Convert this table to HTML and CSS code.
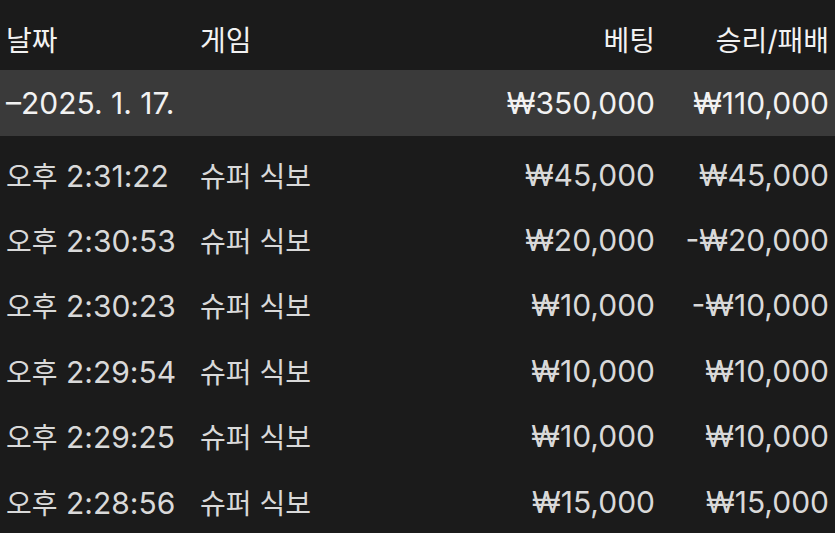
FILE: index.html
```html
<!DOCTYPE html>
<html lang="ko">
<head>
<meta charset="utf-8">
<link rel="stylesheet" href="styles.css">
</head>
<body>
<div class="table">
  <div class="row head">
    <div class="c date ko">날짜</div>
    <div class="c game ko">게임</div>
    <div class="c bet ko">베팅</div>
    <div class="c res ko">승리/패배</div>
  </div>
  <div class="row group">
    <div class="c date">–2025. 1. 17.</div>
    <div class="c game"></div>
    <div class="c bet">₩350,000</div>
    <div class="c res">₩110,000</div>
  </div>
  <div class="list">
    <div class="row item">
      <div class="c date"><span class="ko">오후</span> 2:31:22</div>
      <div class="c game ko">슈퍼 식보</div>
      <div class="c bet">₩45,000</div>
      <div class="c res">₩45,000</div>
    </div>
    <div class="row item">
      <div class="c date"><span class="ko">오후</span> 2:30:53</div>
      <div class="c game ko">슈퍼 식보</div>
      <div class="c bet">₩20,000</div>
      <div class="c res">-₩20,000</div>
    </div>
    <div class="row item">
      <div class="c date"><span class="ko">오후</span> 2:30:23</div>
      <div class="c game ko">슈퍼 식보</div>
      <div class="c bet">₩10,000</div>
      <div class="c res">-₩10,000</div>
    </div>
    <div class="row item">
      <div class="c date"><span class="ko">오후</span> 2:29:54</div>
      <div class="c game ko">슈퍼 식보</div>
      <div class="c bet">₩10,000</div>
      <div class="c res">₩10,000</div>
    </div>
    <div class="row item">
      <div class="c date"><span class="ko">오후</span> 2:29:25</div>
      <div class="c game ko">슈퍼 식보</div>
      <div class="c bet">₩10,000</div>
      <div class="c res">₩10,000</div>
    </div>
    <div class="row item">
      <div class="c date"><span class="ko">오후</span> 2:28:56</div>
      <div class="c game ko">슈퍼 식보</div>
      <div class="c bet">₩15,000</div>
      <div class="c res">₩15,000</div>
    </div>
  </div>
</div>
</body>
</html>
```
FILE: styles.css
```css
html, body {
  margin: 0;
  padding: 0;
  background: #1b1b1b;
  overflow: hidden;
}
.table {
  width: 835px;
  font-family: "Inter", "Noto Sans CJK KR", sans-serif;
  font-size: 30px;
  color: #d9d9d9;
}
.row {
  display: grid;
  grid-template-columns: 194px 1fr 200px 174px;
  align-items: center;
  padding: 0 6px;
}
.ko {
  font-size: 28px;
}
.c.bet, .c.res { text-align: right; white-space: nowrap; }
.head {
  height: 70px;
  padding-top: 8px;
  box-sizing: border-box;
  color: #f2f2f2;
}
.group {
  height: 66px;
  background: #3a3a3a;
  color: #f2f2f2;
}
.list {
  padding-top: 6px;
}
.item {
  height: 65.4px;
}
```
